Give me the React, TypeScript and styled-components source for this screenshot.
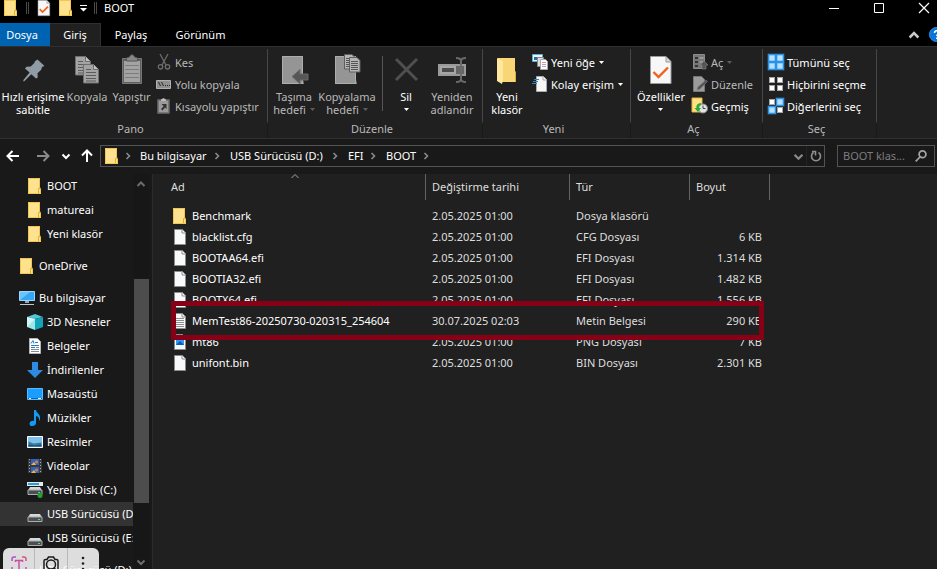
import React from "react";
import styled, { createGlobalStyle, css } from "styled-components";

const Global = createGlobalStyle`
  * { box-sizing: border-box; }
  html, body { margin: 0; padding: 0; background: #191919; }
  body, button, input, table {
    font-family: "Noto Sans", "Open Sans", sans-serif;
    font-size: 11px;
    line-height: 16px;
    color: #fff;
  }
  body { overflow: hidden; }
  button { background: none; border: 0; padding: 0; margin: 0; cursor: default; white-space: nowrap; }
  svg { display: block; flex: none; overflow: visible; }
  ul { list-style: none; margin: 0; padding: 0; }
`;

/* ---------- layout ---------- */

const Window = styled.div`
  position: relative;
  height: 100vh;
  display: flex;
  flex-direction: column;
  overflow: hidden;
  background: #191919;
`;

const TitleBar = styled.header`
  display: flex;
  align-items: center;
  height: 23px;
  padding: 0 8px 7px 3px;
  background: #000;
  flex: none;
`;
const QuickAccess = styled.div`
  display: flex;
  align-items: center;
  gap: 6px;
`;
const QuickSeparator = styled.span`
  width: 3px;
  height: 12px;
  margin: 0 1px;
  border: solid #4a4a4a;
  border-width: 0 1px;
`;
const Title = styled.h1`
  margin: 0 0 0 6px;
  flex: 1;
  font-size: 11px;
  font-weight: 400;
`;
const WindowControls = styled.div`
  display: flex;
  gap: 35px;
`;

const TabBar = styled.nav`
  display: flex;
  align-items: stretch;
  height: 23px;
  background: #000;
  flex: none;
`;
const Tab = styled.button<{ $kind?: "file" | "active"; $width: number }>`
  width: ${(p) => p.$width}px;
  ${(p) => p.$kind === "file" && css`background: #0063b1; padding-right: 6px;`}
  ${(p) => p.$kind === "active" && css`
    background: #202020;
    border: solid #2f2f2f;
    border-width: 1px 1px 0 0;
  `}
`;
const TabTools = styled.div`
  margin-left: auto;
  margin-right: -7px;
  display: flex;
  align-items: center;
  gap: 10px;
`;

const Ribbon = styled.section`
  display: flex;
  padding-top: 2px;
  background: #202020;
  border-top: 1px solid #2f2f2f;
  border-bottom: 1px solid #303030;
  flex: none;
`;
const Group = styled.div<{ $width: number }>`
  width: ${(p) => p.$width}px;
  flex: none;
  border-right: 1px solid;
  border-image: linear-gradient(#474747 80%, #191919 84%) 1;
`;
const GroupBody = styled.div`
  display: flex;
  height: 72px;
  padding-left: 2px;
`;
const GroupLabel = styled.div`
  height: 17px;
  padding-right: 6px;
  color: #b9b9b9;
  text-align: center;
`;
const BigButton = styled.button<{ $width: number }>`
  width: ${(p) => p.$width}px;
  height: 68px;
  padding-top: 5px;
  display: flex;
  flex-direction: column;
  align-items: center;
  gap: 4px;
  line-height: 13px;
  color: #fff;
  &:disabled { color: #b9b9b9; }
`;
const BigLabel = styled.span`
  display: flex;
  flex-direction: column;
  align-items: center;
`;
const Line = styled.span`
  display: flex;
  align-items: center;
  gap: 4px;
  height: 13px;
  line-height: 13px;
`;
const SmallStack = styled.div`
  display: flex;
  flex-direction: column;
  padding: 2px 0 0 3px;
`;
const SmallButton = styled.button`
  display: flex;
  align-items: center;
  gap: 3px;
  height: 22px;
  color: #fff;
  &:disabled { color: #b9b9b9; }
`;
const Divider = styled.span`
  width: 1px;
  height: 55px;
  margin: 7px 2px 0 6px;
  background: #555;
`;

const AddressRow = styled.div`
  display: flex;
  align-items: center;
  height: 35px;
  padding: 0 2px 1px 6px;
  flex: none;
`;
const NavButtons = styled.div`
  display: flex;
  align-items: center;
  width: 94px;
`;
const NavButton = styled.button<{ $width: number }>`
  width: ${(p) => p.$width}px;
`;
const AddressBox = styled.div`
  display: flex;
  align-items: center;
  flex: 1;
  height: 22px;
  border: 1px solid #535353;
  padding-left: 3px;
`;
const Crumbs = styled.ul`
  display: flex;
  flex: 1;
  margin-left: 4px;
`;
const Crumb = styled.li<{ $width: number }>`
  display: flex;
  align-items: center;
  width: ${(p) => p.$width}px;
  a { color: #fff; text-decoration: none; white-space: nowrap; margin-left: 9px; }
  svg { margin-left: auto; }
`;
const AddressTools = styled.div`
  display: flex;
  align-items: center;
  height: 20px;
  gap: 3px;
  padding-right: 2px;
`;
const AddressSplit = styled.span`
  width: 1px;
  height: 20px;
  background: #242424;
`;
const SearchBox = styled.label`
  display: flex;
  align-items: center;
  width: 98px;
  height: 22px;
  margin-left: 12px;
  padding: 0 7px 0 5px;
  border: 1px solid #535353;
  input {
    flex: 1;
    min-width: 0;
    padding: 0;
    border: 0;
    outline: 0;
    background: none;
  }
  input::placeholder { color: #7d7d7d; opacity: 1; }
`;

const Main = styled.div`
  display: flex;
  flex: 1;
  min-height: 0;
`;
const Sidebar = styled.nav`
  width: 133px;
  flex: none;
  overflow: hidden;
`;
const TreeGroup = styled.ul`
  margin-bottom: 8px;
`;
const TreeItem = styled.li<{ $level: number; $selected?: boolean }>`
  a {
    display: flex;
    align-items: center;
    gap: 4px;
    height: 24px;
    padding-left: ${(p) => (p.$level === 1 ? 19 : 27)}px;
    color: #fff;
    text-decoration: none;
    white-space: nowrap;
    background: ${(p) => (p.$selected ? "#333" : "none")};
  }
`;
const ScrollTrack = styled.div`
  display: flex;
  flex-direction: column;
  align-items: center;
  width: 16px;
  padding: 6px 0 3px;
  background: #171717;
`;
const ScrollThumb = styled.div`
  width: 15px;
  flex: 223;
  background: #4d4d4d;
`;
const ScrollGap = styled.div<{ $grow: number }>`
  flex: ${(p) => p.$grow};
`;
const FilePane = styled.section`
  position: relative;
  flex: 1;
  margin-left: 3px;
  border-left: 1px solid #2b2b2b;
  background: #202020;
`;
const SortMark = styled.span`
  position: absolute;
  left: 138px;
  top: -2px;
`;
const FileTable = styled.table`
  width: 617px;
  table-layout: fixed;
  border-collapse: separate;
  border-spacing: 0;
  th {
    height: 26px;
    padding: 0 0 0 6px;
    border-right: 1px solid #636363;
    color: #dedede;
    font-weight: 400;
    text-align: left;
  }
  th:first-child { padding-left: 18px; }
  thead::after { content: ""; display: block; height: 5px; }
  tbody tr { position: relative; }
  td {
    height: 21px;
    padding: 0 0 0 6px;
    color: #dedede;
    white-space: nowrap;
  }
  td:last-child { text-align: right; padding-right: 8px; }
`;
const FileName = styled.span`
  display: flex;
  align-items: center;
  gap: 4px;
  padding-left: 13px;
  color: #fff;
`;
const Marker = styled.span`
  position: absolute;
  z-index: 1;
  inset: -9px 6px -9px 18px;
  border: 5px solid #880015;
`;

const CaptureBar = styled.div`
  position: absolute;
  left: 3px;
  bottom: -11px;
  display: flex;
  width: 96px;
  height: 32px;
  border-radius: 6px;
  background: rgba(250, 250, 250, 0.87);
  overflow: hidden;
`;
const CaptureButton = styled.button`
  flex: 1;
  display: flex;
  justify-content: center;
  padding-top: 8px;
  & + & { border-left: 1px solid #b9b9b9; }
`;

/* ---------- icons ---------- */

const Folder = () => (
  <svg width="16" height="16" viewBox="0 0 16 16">
    <path d="M1 0h12v10l1 1v5H1z" fill="#ffe28f" />
    <path d="M1.500.500h11v10l1 .5v4.500h-12z" fill="none" stroke="#f0c64c" />
    <path d="M11.500 15v-4.500l2-.5" fill="none" stroke="#e0ac2b" />
  </svg>
);
const FilePage = ({ kind }: { kind?: "text" | "png" }) => (
  <svg width="16" height="16" viewBox="0 0 16 16">
    <path d="M2.500.500h8l3 3v12h-11z" fill="#f8f9fa" stroke="#8c8c8c" />
    <path d="M10 1v3h3" fill="none" stroke="#8c8c8c" />
    {kind === "text" && <path d="M4 5.500h8M4 7.500h8M4 9.500h8M4 11.500h8M4 13.500h8" stroke="#8d8d8d" />}
    {kind === "png" && (
      <>
        <path d="M4 5h8v6H4z" fill="#2f9bf2" />
        <path d="M4 11l4-4 4 4z" fill="#0a5bb5" />
      </>
    )}
  </svg>
);
const CheckPage = ({ large }: { large?: boolean }) => (
  <svg width={large ? 32 : 16} height={large ? 32 : 16} viewBox={large ? "-5 -2 32 32" : "-3 0 28 28"}>
    <path d="M.5.500h15.500l5 5v22H.5z" fill="#f7f7f7" stroke="#9a9a9a" />
    <path d="M16 1v5h5" fill="#d8d8d8" stroke="#9a9a9a" />
    <path d="M3.500 16l5 5L18 11.500" fill="none" stroke="#f1601d" strokeWidth={large ? 2.4 : 3} />
  </svg>
);
const Caret = ({ color = "#fff" }: { color?: string }) => (
  <svg width="5" height="3" viewBox="0 0 5 3"><path d="M0 0h5L2.500 3z" fill={color} /></svg>
);
const Chevron = ({ dir, color = "#8a8a8a", size = 8, weight = 1.6 }: { dir: "up" | "down" | "right"; color?: string; size?: number; weight?: number }) => (
  <svg width={size} height={size} viewBox="0 0 8 8">
    <path
      d={dir === "up" ? "M0.500 6L4 2.500 7.500 6" : dir === "down" ? "M0.500 2.500L4 6 7.500 2.500" : "M2.500 1L5.500 4 2.500 7"}
      fill="none" stroke={color} strokeWidth={weight}
    />
  </svg>
);
const QuickMenu = () => (
  <svg width="7" height="8" viewBox="0 0 7 8"><path d="M0 1h7v1H0zM0 4h7L3.500 7.500z" fill="#fff" /></svg>
);
const Minimize = () => <svg width="10" height="10"><path d="M0 5.500h10" stroke="#fff" /></svg>;
const Maximize = () => <svg width="10" height="10"><path d="M.5.500h9v9h-9z" fill="none" stroke="#fff" /></svg>;
const Close = () => <svg width="10" height="10"><path d="M0 0l10 10M10 0L0 10" stroke="#fff" strokeWidth="1.200" /></svg>;
const Help = () => (
  <svg width="15" height="15" viewBox="0 0 15 15">
    <circle cx="7.500" cy="7.500" r="7" fill="#0a74da" stroke="#2d93f0" />
    <path d="M5.500 6c0-3 4.500-3 4.500-.5 0 1.500-2.200 1.700-2.200 3.500M7.800 10.500v1.500" fill="none" stroke="#fff" strokeWidth="1.500" />
  </svg>
);

const Pin = () => (
  <svg width="32" height="32" viewBox="0 0 32 32">
    <path d="M20.500 5.500l7 6.500-2.500 1-.8 2.800-3.700 3.400.3 4.300-1.800 1-4.700-4.300-7 7-1 .1.100-1.200 6.200-7.500-4.600-4.200 1.500-1.600 4.200-.2 3.600-3.700.6-1.600z" fill="#8f9ba5" />
  </svg>
);
const GreyPage = ({ x, y }: { x: number; y: number }) => (
  <g transform={`translate(${x} ${y})`}>
    <path d="M.5.500h10l5 5v13.500H.5z" fill="#a3a3a3" stroke="#6e6e6e" />
    <path d="M10.500.500v5h5" fill="#c2c2c2" stroke="#6e6e6e" />
    <path d="M3 5.500h5M3 8.500h10M3 11.500h10M3 14.500h10M3 17h10" stroke="#5c5c5c" />
  </g>
);
const Copy = () => (
  <svg width="32" height="32" viewBox="0 0 32 32"><GreyPage x={4} y={2} /><GreyPage x={12} y={10} /></svg>
);
const Paste = () => (
  <svg width="32" height="32" viewBox="0 0 32 32">
    <path d="M6.500 4.500h19v25h-19z" fill="#5e5e5e" stroke="#777" />
    <path d="M8 7h16v21H8z" fill="#a3a3a3" />
    <path d="M9 11.500h14M9 15.500h14M9 19.500h14M9 23.500h14" stroke="#7d7d7d" />
    <path d="M10.500 7V4l3-1c1-3 4-3 5 0l3 1v3z" fill="#888" stroke="#555" />
  </svg>
);
const Cut = () => (
  <svg width="16" height="16" viewBox="0 0 16 16" fill="none" stroke="#6c6c6c" strokeWidth="1.300">
    <path d="M4 0l6 11M12 0L6 11" /><circle cx="4.500" cy="12.800" r="2.200" /><circle cx="11.500" cy="12.800" r="2.200" />
  </svg>
);
const PathIcon = () => (
  <svg width="16" height="16" viewBox="0 0 16 16">
    <path d="M.5 4.500h14v8H.5z" fill="#8f8f8f" stroke="#b0b0b0" />
    <path d="M2.500 6l2 4M5.500 6l2 4M9 9.500h1M11 9.500h1M13 9.500h1" stroke="#2a2a2a" />
  </svg>
);
const PasteShortcut = () => (
  <svg width="16" height="16" viewBox="0 0 16 16">
    <path d="M2 2h11v13H2z" fill="#9a9a9a" stroke="#6b6b6b" strokeWidth="1.500" />
    <path d="M5 3V1.500L7.500 0 10 1.500V3z" fill="#bbb" />
    <path d="M5.500 6h5v5L9 9.500 6.500 12.500 5 11l2.700-2.700z" fill="#333" />
  </svg>
);
const GreyFolder = () => (
  <>
    <path d="M4 2h21v24l1 4H4z" fill="#8f8f8f" />
    <path d="M4.500 2.500h20v27h-20z" fill="#959595" stroke="#adadad" />
  </>
);
const MoveTo = () => (
  <svg width="32" height="32" viewBox="0 0 32 32">
    <GreyFolder />
    <path d="M14 22.500l8-7V20h8v6h-8v4z" fill="#565656" stroke="#6a6a6a" />
  </svg>
);
const CopyTo = () => (
  <svg width="32" height="32" viewBox="0 0 32 32">
    <GreyFolder />
    {[[13, 0], [18, 3]].map(([x, y]) => (
      <g key={x} transform={`translate(${x} ${y})`}>
        <path d="M.5.500h7.500l3 3v11.500H.5z" fill="#b5b5b5" stroke="#5e5e5e" />
        <path d="M2 4.500h7M2 6.500h7M2 8.500h7M2 10.500h7M2 12.500h7" stroke="#555" />
      </g>
    ))}
  </svg>
);
const Delete = () => (
  <svg width="32" height="32" viewBox="0 0 32 32">
    <path d="M6 5l21 21M27 5L6 26" stroke="#4f4f4f" strokeWidth="3" />
  </svg>
);
const Rename = () => (
  <svg width="32" height="32" viewBox="0 0 32 32" fill="none">
    <path d="M3 11h26v10H3z" fill="#666" stroke="#999" strokeWidth="2" />
    <path d="M5 13h14v6H5z" fill="#4c4c4c" stroke="#a6a6a6" strokeWidth="2" />
    <path d="M20 4q5 0 5 3v18q0 3-5 3M30 4q-5 0-5 3M30 28q-5 0-5-3" stroke="#6a6a6a" strokeWidth="2" />
  </svg>
);
const BigFolder = () => (
  <svg width="32" height="32" viewBox="0 0 32 32">
    <path d="M7 4h17v13l1 1v10H9z" fill="#f8d676" />
    <path d="M6 4l6 3v19l-1 4-5-3z" fill="#ffe79f" />
    <path d="M24.500 18v10" stroke="#dcae3c" />
  </svg>
);
const NewItem = () => (
  <svg width="16" height="16" viewBox="0 0 16 16">
    <path d="M.5.500h10v7H.5z" fill="#eaf5fc" stroke="#57aede" /><path d="M2 3h4v3H2z" fill="#2b6c9a" />
    <path d="M5.500 3.500h6v9h-6z" fill="#ddd" stroke="#888" />
    <path d="M8.500 5.500h5l2 2v8h-7z" fill="#fff" stroke="#aaa" />
    <path d="M10 8.500h4M10 12.500h4" stroke="#e09a9a" /><path d="M10 10.500h4" stroke="#94aee0" />
  </svg>
);
const EasyAccess = () => (
  <svg width="16" height="16" viewBox="0 0 16 16">
    <path d="M4.500.500h7l3 3v12h-10z" fill="#f7f7f7" stroke="#aaa" /><path d="M11 1v3h3" fill="none" stroke="#aaa" />
    <path d="M2 3.500h5M1 5.500h5M0 7.500h5" stroke="#3581c4" />
  </svg>
);
const OpenIcon = () => (
  <svg width="16" height="16" viewBox="0 0 16 16">
    <path d="M1.500.500h11v14h-11z" fill="#777" stroke="#8a8a8a" />
    <path d="M3 3h3v2H3zM3 7h3v2H3zM3 11h3v2H3z" fill="#333" /><path d="M7.500 4h4M7.500 8h4" stroke="#bbb" />
    <path d="M10 15v-4H8l4-4 4 4h-2v4z" fill="#555" stroke="#888" strokeWidth=".6" />
  </svg>
);
const EditIcon = () => (
  <svg width="16" height="16" viewBox="0 0 16 16">
    <path d="M1.500.500h8l3 3v12h-11z" fill="#9b9b9b" stroke="#777" />
    <path d="M5 14l1-3 8-7 1.500 1.500-7.500 7.500z" fill="#555" stroke="#777" strokeWidth=".6" />
  </svg>
);
const HistoryIcon = () => (
  <svg width="16" height="16" viewBox="0 0 16 16">
    <path d="M0 0h10v14H0z" fill="#ffe084" stroke="#e2b440" />
    <circle cx="11" cy="10.500" r="4.500" fill="#e3e3e3" stroke="#888" /><path d="M11 7.500v3h2.500" fill="none" stroke="#444" />
    <path d="M9 5C4.500 5 4 9 4.500 10H2.500L6 14l3-4H7C7 8 7.500 7 9 7z" fill="#27ab3b" />
  </svg>
);
const SelectIcon = ({ on }: { on: boolean[] }) => (
  <svg width="16" height="16" viewBox="0 0 16 16">
    {on.map((sel, i) => (
      <rect key={i} x={(i % 2) * 8 + (sel ? 0.5 : 1.5)} y={(i > 1 ? 8 : 0) + (sel ? 0.5 : 1.5)}
        width={sel ? 7 : 5} height={sel ? 7 : 5} fill={sel ? "#b9e1ff" : "#fff"} stroke={sel ? "#2a93e8" : "#a5a5a5"} strokeWidth={sel ? 1.6 : 1} />
    ))}
  </svg>
);
const Arrow = ({ dir, color }: { dir: "left" | "right" | "up"; color: string }) => (
  <svg width="14" height="14" viewBox="0 0 14 14">
    <path
      d={dir === "left" ? "M13 7H2M6.500 2L1.500 7l5 5" : dir === "right" ? "M1 7h11M7.500 2l5 5-5 5" : "M7 13V2M2 6.500l5-5 5 5"}
      fill="none" stroke={color} strokeWidth="2"
    />
  </svg>
);
const Refresh = () => (
  <svg width="12" height="12" viewBox="0 0 12 12">
    <path d="M8.500 2.500a4.500 4.500 0 1 1-5 0M2 1.500h3.500v4" fill="none" stroke="#8f8f8f" strokeWidth="1.600" />
  </svg>
);
const Search = () => (
  <svg width="12" height="12" viewBox="0 0 12 12" fill="none" stroke="#a5a5a5" strokeWidth="1.700">
    <circle cx="7.500" cy="4.300" r="3.400" /><path d="M5 7L.7 11.300" />
  </svg>
);
const Computer = () => (
  <svg width="16" height="16" viewBox="0 0 16 16">
    <path d="M.5 1.500h15v9H.5z" fill="#35a8f5" stroke="#9fd6fb" /><path d="M1 10L11 2H1z" fill="#6cc3fa" />
    <path d="M6 11h4v2H6z" fill="#93a5b3" /><path d="M1 14.500h14" stroke="#bcc8d1" />
  </svg>
);
const Cube = () => (
  <svg width="16" height="16" viewBox="0 0 16 16">
    <path d="M0 3l8 2v11l-8-3z" fill="#9be7ea" /><path d="M0 3l8-3 8 3-8 2z" fill="#4fc7d5" />
    <path d="M16 3L8 5v11l8-3z" fill="#13a4bb" /><path d="M0 3l8 2-8 8z" fill="#d2f6f5" />
  </svg>
);
const Documents = () => (
  <svg width="16" height="16" viewBox="0 0 16 16">
    <path d="M2.500.500h8l3 3v12h-11z" fill="#fff" stroke="#b5b5b5" />
    <path d="M4 5.500l2-3 1 3M8 4.500h3M4 7.500h8M4 9.500h4" fill="none" stroke="#2b7bc6" /><path d="M9 9.500h3M4 11.500h8M4 13.500h8" stroke="#7d8c99" />
  </svg>
);
const Downloads = () => (
  <svg width="16" height="16" viewBox="0 0 16 16"><path d="M5 0h6v8h5l-8 8-8-8h5z" fill="#2f8be2" /></svg>
);
const Desktop = () => (
  <svg width="16" height="16" viewBox="0 0 16 16">
    <path d="M.5 2.500h15v11H.5z" fill="#1a9dff" stroke="#58baff" /><path d="M1 12.500h14" stroke="#0963ad" /><path d="M2 12.500h2M11 12.500h3" stroke="#fff" />
  </svg>
);
const Music = () => (
  <svg width="16" height="16" viewBox="0 0 16 16">
    <path d="M7 0h2c0 3 5 4 4 9-.3 1.500-1 2-1 2 .6-3-1-4.500-3-5v7c0 4-7 4-6.500.5C3 11 5.500 10.500 7 11z" fill="#1499f5" />
  </svg>
);
const Pictures = () => (
  <svg width="16" height="16" viewBox="0 0 16 16">
    <path d="M.5 2.500h15v11H.5z" fill="#7fc1ef" stroke="#fff" /><path d="M1.500 12.500v-5l5 2 8-1v4z" fill="#3c7d8b" /><path d="M1.500 12.500v-2l6 1 7-1v2z" fill="#1c4e87" />
  </svg>
);
const Videos = () => (
  <svg width="16" height="16" viewBox="0 0 16 16">
    <path d="M1 1h14v14H1z" fill="#3a3a3a" /><path d="M4 1h8v6H4zM4 9h8v6H4z" fill="#2b62c4" />
    <path d="M4 7l3-3 2 3zM4 15l3-3 2 3z" fill="#e8b93e" /><circle cx="9.500" cy="4" r="1.500" fill="#de7b35" /><circle cx="9.500" cy="12" r="1.500" fill="#de7b35" />
    <path d="M2.500 1v14M13.500 1v14" stroke="#aaa" strokeDasharray="1 2" />
  </svg>
);
const Drive = ({ system }: { system?: boolean }) => (
  <svg width="16" height="16" viewBox="0 0 16 16">
    {system && <><path d="M0 0h16v4H0z" fill="#e8e8e8" /><path d="M1 1h11v2H1z" fill="#27a0dc" /></>}
    <g transform={system ? "translate(0 -2)" : "translate(0 1)"}>
      <path d="M3 7h10l2 3.500H1z" fill="#d4d8db" /><path d="M1 10h14v4.500H1z" fill="#4b4f52" stroke="#a9adb0" />
      <path d="M11 12.500h2" stroke="#49e06a" />
    </g>
    {system && <circle cx="13" cy="13.500" r="2.500" fill="#1fa431" />}
  </svg>
);
const TextCapture = () => (
  <svg width="16" height="16" viewBox="0 0 16 16" fill="none" strokeWidth="1.500">
    <path d="M1 5V3q0-2 2-2h2" stroke="#b24bd0" /><path d="M11 1h2q2 0 2 2v2" stroke="#e0507e" />
    <path d="M1 11v4M15 11v4" stroke="#c050b8" /><path d="M4.500 6V4.500h7V6M8 4.500V14" stroke="#c44fa5" />
  </svg>
);
const Lens = () => (
  <svg width="18" height="18" viewBox="0 0 18 18" fill="none" stroke="#1c1c1c" strokeWidth="1.500">
    <path d="M2 16V5q0-1.500 1.500-1.500H5L6.500 1h5L13 3.500h1.500Q16 3.500 16 5v11" /><circle cx="9" cy="8.500" r="4.500" /><path d="M12 12l4 4" />
  </svg>
);
const More = () => (
  <svg width="4" height="16" viewBox="0 0 4 16" fill="#1c1c1c"><circle cx="2" cy="2" r="1.300" /><circle cx="2" cy="7.500" r="1.300" /><circle cx="2" cy="13" r="1.300" /></svg>
);

/* ---------- data ---------- */

const files: { name: string; date: string; type: string; size: string; icon: React.ReactNode; marked?: boolean }[] = [
  { name: "Benchmark", date: "2.05.2025 01:00", type: "Dosya klasörü", size: "", icon: <Folder /> },
  { name: "blacklist.cfg", date: "2.05.2025 01:00", type: "CFG Dosyası", size: "6 KB", icon: <FilePage /> },
  { name: "BOOTAA64.efi", date: "2.05.2025 01:00", type: "EFI Dosyası", size: "1.314 KB", icon: <FilePage /> },
  { name: "BOOTIA32.efi", date: "2.05.2025 01:00", type: "EFI Dosyası", size: "1.482 KB", icon: <FilePage /> },
  { name: "BOOTX64.efi", date: "2.05.2025 01:00", type: "EFI Dosyası", size: "1.556 KB", icon: <FilePage /> },
  { name: "MemTest86-20250730-020315_254604", date: "30.07.2025 02:03", type: "Metin Belgesi", size: "290 KB", icon: <FilePage kind="text" />, marked: true },
  { name: "mt86", date: "2.05.2025 01:00", type: "PNG Dosyası", size: "7 KB", icon: <FilePage kind="png" /> },
  { name: "unifont.bin", date: "2.05.2025 01:00", type: "BIN Dosyası", size: "2.301 KB", icon: <FilePage /> },
];

type Node = { label: string; icon: React.ReactNode; level: number; selected?: boolean };
const tree: Node[][] = [
  [
    { label: "BOOT", icon: <Folder />, level: 2 },
    { label: "matureai", icon: <Folder />, level: 2 },
    { label: "Yeni klasör", icon: <Folder />, level: 2 },
  ],
  [{ label: "OneDrive", icon: <Folder />, level: 1 }],
  [
    { label: "Bu bilgisayar", icon: <Computer />, level: 1 },
    { label: "3D Nesneler", icon: <Cube />, level: 2 },
    { label: "Belgeler", icon: <Documents />, level: 2 },
    { label: "İndirilenler", icon: <Downloads />, level: 2 },
    { label: "Masaüstü", icon: <Desktop />, level: 2 },
    { label: "Müzikler", icon: <Music />, level: 2 },
    { label: "Resimler", icon: <Pictures />, level: 2 },
    { label: "Videolar", icon: <Videos />, level: 2 },
    { label: "Yerel Disk (C:)", icon: <Drive system />, level: 2 },
    { label: "USB Sürücüsü (D:)", icon: <Drive />, level: 2, selected: true },
    { label: "USB Sürücüsü (E:)", icon: <Drive />, level: 2 },
  ],
  [{ label: "USB Sürücüsü (D:)", icon: <Drive />, level: 1 }],
];

const crumbs = [
  { label: "Bu bilgisayar", width: 90 },
  { label: "USB Sürücüsü (D:)", width: 118 },
  { label: "EFI", width: 38 },
  { label: "BOOT", width: 53 },
];

type CaretState = "on" | "off";
const Big = ({ icon, lines, width, disabled, caret }: { icon: React.ReactNode; lines: string[]; width: number; disabled?: boolean; caret?: CaretState }) => (
  <BigButton $width={width} disabled={disabled}>
    {icon}
    <BigLabel>
      {lines.map((l, i) => (
        <Line key={i}>{l}{caret && i === lines.length - 1 && <Caret color={caret === "on" ? "#fff" : "#5c5c5c"} />}</Line>
      ))}
    </BigLabel>
  </BigButton>
);
const Small = ({ icon, label, disabled, caret }: { icon: React.ReactNode; label: string; disabled?: boolean; caret?: CaretState }) => (
  <SmallButton disabled={disabled}>
    {icon}
    <Line>{label}{caret && <Caret color={caret === "on" ? "#fff" : "#5c5c5c"} />}</Line>
  </SmallButton>
);

export default function App() {
  return (
    <>
      <Global />
      <Window>
        <TitleBar>
          <QuickAccess>
            <Folder />
            <QuickSeparator />
            <CheckPage />
            <Folder />
            <button aria-label="Hızlı erişim menüsü"><QuickMenu /></button>
            <QuickSeparator />
          </QuickAccess>
          <Title>BOOT</Title>
          <WindowControls>
            <button aria-label="Küçült"><Minimize /></button>
            <button aria-label="Ekranı kapla"><Maximize /></button>
            <button aria-label="Kapat"><Close /></button>
          </WindowControls>
        </TitleBar>

        <TabBar>
          <Tab $kind="file" $width={50}>Dosya</Tab>
          <Tab $kind="active" $width={51}>Giriş</Tab>
          <Tab $width={60}>Paylaş</Tab>
          <Tab $width={79}>Görünüm</Tab>
          <TabTools>
            <button aria-label="Şeridi küçült"><Chevron dir="up" color="#c9c9c9" size={10} weight={2} /></button>
            <button aria-label="Yardım"><Help /></button>
          </TabTools>
        </TabBar>

        <Ribbon>
          <Group $width={268}>
            <GroupBody>
              <Big icon={<Pin />} lines={["Hızlı erişime", "sabitle"]} width={62} />
              <Big icon={<Copy />} lines={["Kopyala"]} width={46} disabled />
              <Big icon={<Paste />} lines={["Yapıştır"]} width={43} disabled />
              <SmallStack>
                <Small icon={<Cut />} label="Kes" disabled />
                <Small icon={<PathIcon />} label="Yolu kopyala" disabled />
                <Small icon={<PasteShortcut />} label="Kısayolu yapıştır" disabled />
              </SmallStack>
            </GroupBody>
            <GroupLabel>Pano</GroupLabel>
          </Group>
          <Group $width={215}>
            <GroupBody>
              <Big icon={<MoveTo />} lines={["Taşıma", "hedefi"]} width={48} disabled caret="off" />
              <Big icon={<CopyTo />} lines={["Kopyalama", "hedefi"]} width={58} disabled caret="off" />
              <Divider />
              <Big icon={<Delete />} lines={["Sil", ""]} width={42} caret="on" />
              <Big icon={<Rename />} lines={["Yeniden", "adlandır"]} width={50} disabled />
            </GroupBody>
            <GroupLabel>Düzenle</GroupLabel>
          </Group>
          <Group $width={148}>
            <GroupBody>
              <Big icon={<BigFolder />} lines={["Yeni", "klasör"]} width={44} />
              <SmallStack>
                <Small icon={<NewItem />} label="Yeni öğe" caret="on" />
                <Small icon={<EasyAccess />} label="Kolay erişim" caret="on" />
              </SmallStack>
            </GroupBody>
            <GroupLabel>Yeni</GroupLabel>
          </Group>
          <Group $width={132}>
            <GroupBody>
              <Big icon={<CheckPage large />} lines={["Özellikler", ""]} width={56} caret="on" />
              <SmallStack>
                <Small icon={<OpenIcon />} label="Aç" disabled caret="off" />
                <Small icon={<EditIcon />} label="Düzenle" disabled />
                <Small icon={<HistoryIcon />} label="Geçmiş" />
              </SmallStack>
            </GroupBody>
            <GroupLabel>Aç</GroupLabel>
          </Group>
          <Group $width={114}>
            <GroupBody>
              <SmallStack>
                <Small icon={<SelectIcon on={[true, true, true, true]} />} label="Tümünü seç" />
                <Small icon={<SelectIcon on={[false, false, false, false]} />} label="Hiçbirini seçme" />
                <Small icon={<SelectIcon on={[false, true, true, false]} />} label="Diğerlerini seç" />
              </SmallStack>
            </GroupBody>
            <GroupLabel>Seç</GroupLabel>
          </Group>
        </Ribbon>

        <AddressRow>
          <NavButtons>
            <NavButton $width={30} aria-label="Geri"><Arrow dir="left" color="#fff" /></NavButton>
            <NavButton $width={26} aria-label="İleri"><Arrow dir="right" color="#8a8a8a" /></NavButton>
            <NavButton $width={18} aria-label="Son konumlar"><Chevron dir="down" color="#fff" size={8} weight={2} /></NavButton>
            <NavButton $width={20} aria-label="Yukarı"><Arrow dir="up" color="#fff" /></NavButton>
          </NavButtons>
          <AddressBox>
            <Folder />
            <Crumbs>
              <Crumb $width={7}><Chevron dir="right" /></Crumb>
              {crumbs.map((c) => (
                <Crumb key={c.label} $width={c.width}><a href="#">{c.label}</a><Chevron dir="right" /></Crumb>
              ))}
            </Crumbs>
            <AddressTools>
              <button aria-label="Önceki konumlar"><Chevron dir="down" size={9} weight={2} /></button>
              <AddressSplit />
              <button aria-label="Yenile"><Refresh /></button>
            </AddressTools>
          </AddressBox>
          <SearchBox>
            <input aria-label="Ara" placeholder="BOOT klas..." />
            <Search />
          </SearchBox>
        </AddressRow>

        <Main>
          <Sidebar>
            {tree.map((group, i) => (
              <TreeGroup key={i}>
                {group.map((n) => (
                  <TreeItem key={n.label} $level={n.level} $selected={n.selected}>
                    <a href="#">{n.icon}{n.label}</a>
                  </TreeItem>
                ))}
              </TreeGroup>
            ))}
          </Sidebar>
          <ScrollTrack>
            <Chevron dir="up" color="#6c6c6c" weight={2} />
            <ScrollGap $grow={91} />
            <ScrollThumb />
            <ScrollGap $grow={55} />
            <Chevron dir="down" color="#6c6c6c" weight={2} />
          </ScrollTrack>
          <FilePane>
            <SortMark><Chevron dir="up" color="#a5a5a5" weight={1} /></SortMark>
            <FileTable>
              <colgroup>
                <col width="273" /><col width="144" /><col width="120" /><col width="80" />
              </colgroup>
              <thead>
                <tr><th>Ad</th><th>Değiştirme tarihi</th><th>Tür</th><th>Boyut</th></tr>
              </thead>
              <tbody>
                {files.map((f) => (
                  <tr key={f.name}>
                    <td><FileName>{f.icon}{f.name}</FileName></td>
                    <td>{f.date}</td>
                    <td>{f.type}</td>
                    <td>{f.size}{f.marked && <Marker />}</td>
                  </tr>
                ))}
              </tbody>
            </FileTable>
          </FilePane>
        </Main>

        <CaptureBar>
          <CaptureButton aria-label="Metin yakala"><TextCapture /></CaptureButton>
          <CaptureButton aria-label="Görsel ara"><Lens /></CaptureButton>
          <CaptureButton aria-label="Diğer"><More /></CaptureButton>
        </CaptureBar>
      </Window>
    </>
  );
}
